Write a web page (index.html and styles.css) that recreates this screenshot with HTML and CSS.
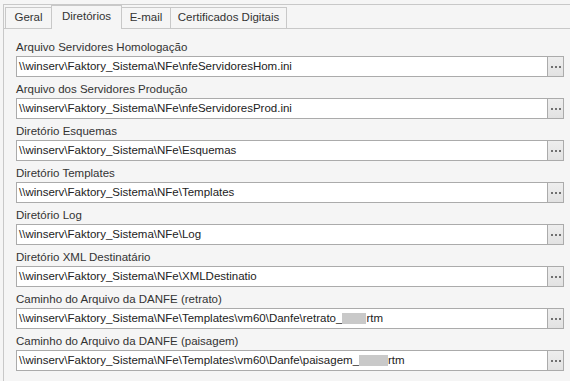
FILE: index.html
```html
<!DOCTYPE html>
<html lang="pt-BR">
<head>
    <meta charset="UTF-8">
    <meta name="viewport" content="width=device-width, initial-scale=1.0">
    <title>Configurações NFe</title>
    <link rel="stylesheet" href="styles.css">
</head>
<body>
    <div class="frame">
        <div class="tabs">
            <div class="tab tab-geral">Geral</div>
            <div class="tab tab-dir active">Diretórios</div>
            <div class="tab tab-email">E-mail</div>
            <div class="tab tab-cert">Certificados Digitais</div>
        </div>

        <div class="panel">
            <div class="field">
                <label>Arquivo Servidores Homologação</label>
                <div class="edit">
                    <div class="text">\\winserv\Faktory_Sistema\NFe\nfeServidoresHom.ini</div>
                    <div class="dots"><span></span><span></span><span></span></div>
                </div>
            </div>
            <div class="field">
                <label>Arquivo dos Servidores Produção</label>
                <div class="edit">
                    <div class="text">\\winserv\Faktory_Sistema\NFe\nfeServidoresProd.ini</div>
                    <div class="dots"><span></span><span></span><span></span></div>
                </div>
            </div>
            <div class="field">
                <label>Diretório Esquemas</label>
                <div class="edit">
                    <div class="text">\\winserv\Faktory_Sistema\NFe\Esquemas</div>
                    <div class="dots"><span></span><span></span><span></span></div>
                </div>
            </div>
            <div class="field">
                <label>Diretório Templates</label>
                <div class="edit">
                    <div class="text">\\winserv\Faktory_Sistema\NFe\Templates</div>
                    <div class="dots"><span></span><span></span><span></span></div>
                </div>
            </div>
            <div class="field">
                <label>Diretório Log</label>
                <div class="edit">
                    <div class="text">\\winserv\Faktory_Sistema\NFe\Log</div>
                    <div class="dots"><span></span><span></span><span></span></div>
                </div>
            </div>
            <div class="field">
                <label>Diretório XML Destinatário</label>
                <div class="edit">
                    <div class="text">\\winserv\Faktory_Sistema\NFe\XMLDestinatio</div>
                    <div class="dots"><span></span><span></span><span></span></div>
                </div>
            </div>
            <div class="field">
                <label>Caminho do Arquivo da DANFE (retrato)</label>
                <div class="edit">
                    <div class="text">\\winserv\Faktory_Sistema\NFe\Templates\vm60\Danfe\retrato_<span class="blur b1"></span>rtm</div>
                    <div class="dots"><span></span><span></span><span></span></div>
                </div>
            </div>
            <div class="field">
                <label>Caminho do Arquivo da DANFE (paisagem)</label>
                <div class="edit">
                    <div class="text">\\winserv\Faktory_Sistema\NFe\Templates\vm60\Danfe\paisagem_<span class="blur b2"></span>rtm</div>
                    <div class="dots"><span></span><span></span><span></span></div>
                </div>
            </div>
        </div>
    </div>
</body>
</html>
```

FILE: styles.css
```css
* {
    box-sizing: border-box;
    margin: 0;
    padding: 0;
}
html, body {
    height: 100%;
    overflow: hidden;
}
body {
    font-family: 'Liberation Sans', Arial, sans-serif;
    font-size: 11.5px;
    color: #333;
    background: #f5f5f5;
}
.frame {
    margin: 4px 0 0 3px;
    height: calc(100% - 4px);
    border-top: 1px solid #c8c8c8;
    border-left: 1px solid #c8c8c8;
}
.tabs {
    display: flex;
    align-items: flex-end;
    height: 24px;
    padding-left: 1px;
    border-bottom: 1px solid #c8c8c8;
}
.tab {
    height: 21px;
    line-height: 19px;
    text-align: center;
    border: 1px solid #c8c8c8;
    border-bottom: none;
    margin-left: -1px;
    color: #333;
    background: #f5f5f5;
}
.tab:first-child {
    margin-left: 0;
}
.tab.active {
    height: 24px;
    margin-bottom: -1px;
    line-height: 20px;
}
.tab-geral { width: 47px; }
.tab-dir { width: 71px; }
.tab-email { width: 50px; }
.tab-cert { width: 117px; }

.panel {
    padding: 10px 6px 0 12px;
}
.field {
    margin-bottom: 4px;
}
.field label {
    display: block;
    height: 17px;
    line-height: 16px;
    color: #333;
}
.edit {
    display: flex;
    height: 21px;
}
.text {
    flex: 1;
    border: 1px solid #ababab;
    background: #fff;
    color: #222;
    line-height: 19px;
    padding-left: 2px;
    white-space: nowrap;
    overflow: hidden;
}
.dots {
    width: 17px;
    margin-left: -1px;
    border: 1px solid #ababab;
    background: linear-gradient(#eeeeee, #e2e2e2);
    display: flex;
    justify-content: center;
    align-items: center;
    gap: 2px;
    padding-top: 1px;
}
.dots span {
    width: 2px;
    height: 2px;
    background: #707070;
}
.blur {
    display: inline-block;
    height: 11px;
    vertical-align: -2px;
    background: #c9c9c9;
}
.b1 { width: 24px; }
.b2 { width: 29px; }
```
